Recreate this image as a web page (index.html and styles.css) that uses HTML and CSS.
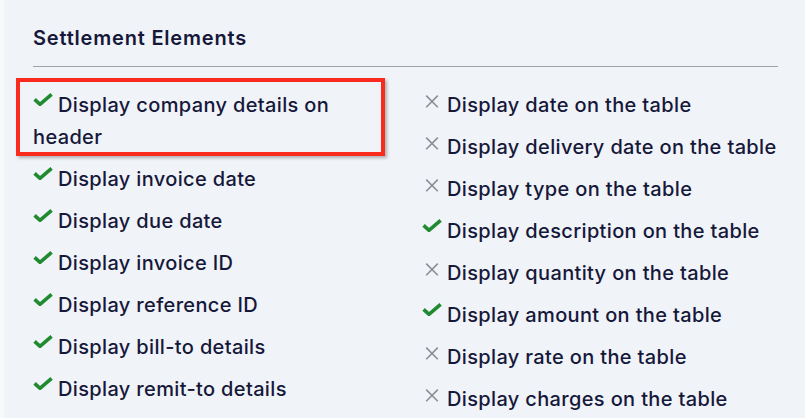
FILE: index.html
```html
<!DOCTYPE html>
<html lang="en">
<head>
<meta charset="utf-8">
<title>Settlement Elements</title>
<link rel="stylesheet" href="styles.css">
</head>
<body>
<div class="page">
  <section class="panel">
    <h2 class="title">Settlement Elements</h2>
    <hr class="divider">
    <div class="grid">
      <ul class="col col-left">
        <li class="item highlighted"><svg class="ic-check" viewBox="0 0 20 13"><polyline points="1.6,6.4 7,11.3 18.6,1.4"/></svg>Display company details on header<span class="mark"></span></li>
        <li class="item"><svg class="ic-check" viewBox="0 0 20 13"><polyline points="1.6,6.4 7,11.3 18.6,1.4"/></svg>Display invoice date</li>
        <li class="item"><svg class="ic-check" viewBox="0 0 20 13"><polyline points="1.6,6.4 7,11.3 18.6,1.4"/></svg>Display due date</li>
        <li class="item"><svg class="ic-check" viewBox="0 0 20 13"><polyline points="1.6,6.4 7,11.3 18.6,1.4"/></svg>Display invoice ID</li>
        <li class="item"><svg class="ic-check" viewBox="0 0 20 13"><polyline points="1.6,6.4 7,11.3 18.6,1.4"/></svg>Display reference ID</li>
        <li class="item"><svg class="ic-check" viewBox="0 0 20 13"><polyline points="1.6,6.4 7,11.3 18.6,1.4"/></svg>Display bill-to details</li>
        <li class="item"><svg class="ic-check" viewBox="0 0 20 13"><polyline points="1.6,6.4 7,11.3 18.6,1.4"/></svg>Display remit-to details</li>
      </ul>
      <ul class="col">
        <li class="item"><svg class="ic-x" viewBox="0 0 20 13"><path d="M4.2,0.6 L15.8,12.2 M15.8,0.6 L4.2,12.2"/></svg>Display date on the table</li>
        <li class="item"><svg class="ic-x" viewBox="0 0 20 13"><path d="M4.2,0.6 L15.8,12.2 M15.8,0.6 L4.2,12.2"/></svg>Display delivery date on the table</li>
        <li class="item"><svg class="ic-x" viewBox="0 0 20 13"><path d="M4.2,0.6 L15.8,12.2 M15.8,0.6 L4.2,12.2"/></svg>Display type on the table</li>
        <li class="item"><svg class="ic-check" viewBox="0 0 20 13"><polyline points="1.6,6.4 7,11.3 18.6,1.4"/></svg>Display description on the table</li>
        <li class="item"><svg class="ic-x" viewBox="0 0 20 13"><path d="M4.2,0.6 L15.8,12.2 M15.8,0.6 L4.2,12.2"/></svg>Display quantity on the table</li>
        <li class="item"><svg class="ic-check" viewBox="0 0 20 13"><polyline points="1.6,6.4 7,11.3 18.6,1.4"/></svg>Display amount on the table</li>
        <li class="item"><svg class="ic-x" viewBox="0 0 20 13"><path d="M4.2,0.6 L15.8,12.2 M15.8,0.6 L4.2,12.2"/></svg>Display rate on the table</li>
        <li class="item"><svg class="ic-x" viewBox="0 0 20 13"><path d="M4.2,0.6 L15.8,12.2 M15.8,0.6 L4.2,12.2"/></svg>Display charges on the table</li>
      </ul>
    </div>
  </section>
</div>
</body>
</html>
```

FILE: styles.css
```css
* { box-sizing: border-box; }
html, body { margin: 0; padding: 0; }
body {
  font-family: Inter, "Noto Sans", "Liberation Sans", sans-serif;
  color: #16183a;
  background: #f8f9fb;
}
.page {
  padding-left: 4px;
  height: 418px;
  overflow: hidden;
}
.panel {
  background: #f0f3f8;
  height: 100%;
  padding: 26px 27px 0 29px;
}
.title {
  margin: 0;
  font-size: 20px;
  line-height: 24px;
  font-weight: 600;
  letter-spacing: 0.8px;
}
.divider {
  margin: 16px 0 0 0;
  border: 0;
  height: 1px;
  background: #a3a3a6;
  width: 745px;
}
.grid {
  display: grid;
  grid-template-columns: 389px 1fr;
  margin-top: 22px;
}
.col {
  list-style: none;
  margin: 0;
  padding: 0;
  display: flex;
  flex-direction: column;
  gap: 10px;
}
.col-left { padding-right: 36px; }
.item {
  font-size: 20px;
  line-height: 32px;
  font-weight: 500;
  letter-spacing: 0.35px;
}
.ic-check, .ic-x {
  width: 20px;
  height: 13px;
  margin-right: 5px;
  vertical-align: 6px;
}
.ic-check polyline {
  fill: none;
  stroke: #1f8a2f;
  stroke-width: 3.6;
  stroke-linecap: butt;
  stroke-linejoin: miter;
}
.ic-x { vertical-align: 4px; }
.ic-x path {
  fill: none;
  stroke: #8c9096;
  stroke-width: 1.6;
}
.highlighted { position: relative; }
.mark {
  position: absolute;
  left: -17px;
  top: -11px;
  width: 369px;
  height: 78px;
  border: 4px solid #fb2a1f;
  box-shadow: 2px 2px 3px rgba(0, 0, 0, 0.28);
  pointer-events: none;
}
```
